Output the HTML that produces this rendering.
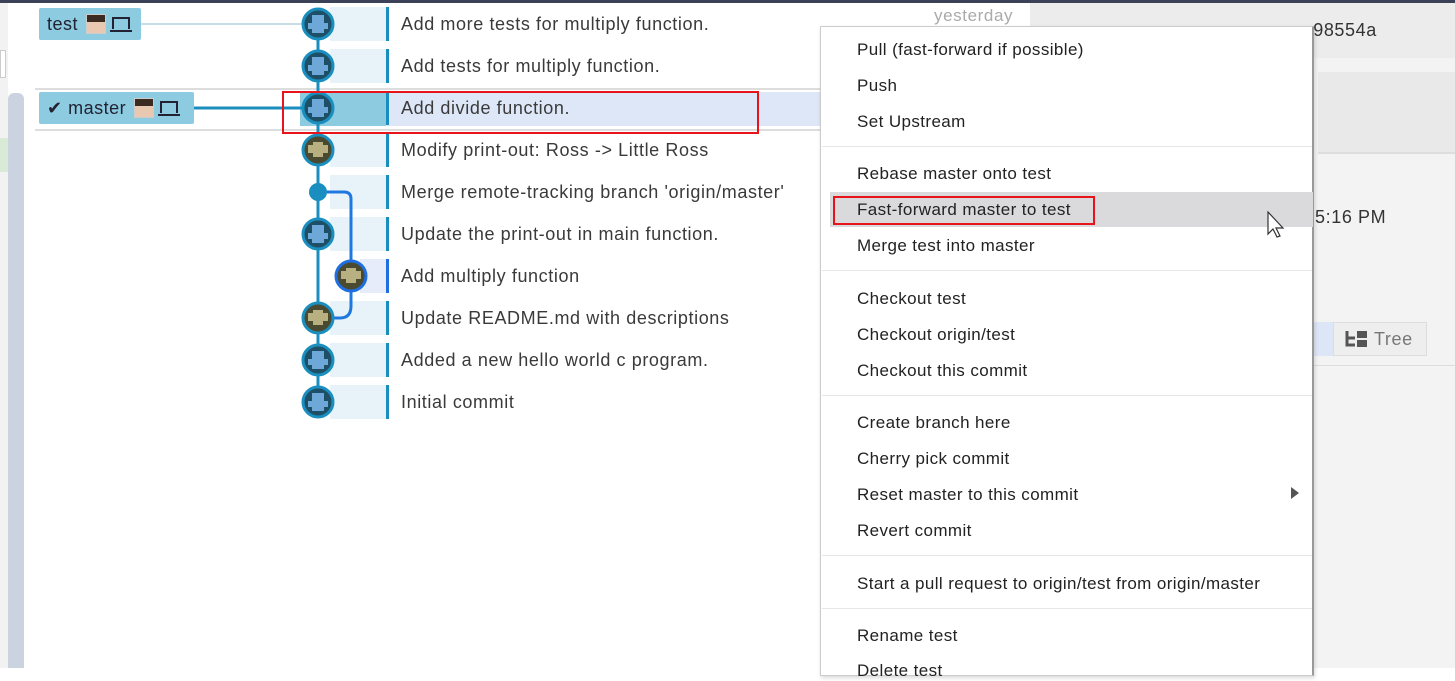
<!DOCTYPE html>
<html><head><meta charset="utf-8"><style>
*{margin:0;padding:0;box-sizing:border-box}
body{width:1455px;height:668px;overflow:hidden;background:#fff;font-family:"Liberation Sans",sans-serif;position:relative;color:#333}
.a{position:absolute}
.msg{position:absolute;left:386px;width:440px;height:34px;border-left:3px solid #1a8fbf;font-size:18px;line-height:34px;padding-left:12px;color:#3a3a3a;white-space:nowrap;letter-spacing:0.6px}
.strip{position:absolute;left:330px;width:56px;height:34px;background:#e8f3f9}
.mi{position:absolute;left:857px;font-size:17px;color:#222;white-space:nowrap;line-height:20px;letter-spacing:0.4px}
.sep{position:absolute;left:822px;width:490px;height:1px;background:#e6e6e6}
.tag{position:absolute;background:#8ccbe0;border-radius:2px;height:32px;font-size:18px;line-height:32px;color:#223;letter-spacing:0.5px}
.av{display:inline-block;width:20px;height:20px;vertical-align:middle;margin:0 6px 3px 8px;border:1px solid #ccc;background:linear-gradient(#3a2a22 40%,#e8c8b0 40%)}
.lp{display:inline-block;width:18px;height:12px;border:2px solid #223;border-bottom:none;vertical-align:middle;margin-bottom:4px;position:relative}
.lp:after{content:"";position:absolute;left:-4px;bottom:-3px;width:22px;height:2px;background:#223}
</style></head><body>
<div class="a" style="left:0;top:0;width:1455px;height:3px;background:#3b4157"></div>
<div class="a" style="left:0;top:3px;width:8px;height:665px;background:#f2f2f2"></div>
<div class="a" style="left:0;top:50px;width:6px;height:28px;background:#fff;border:1px solid #ccc"></div>
<div class="a" style="left:0;top:138px;width:8px;height:34px;background:#d9ebd6"></div>
<div class="a" style="left:8px;top:93px;width:16px;height:575px;background:#cbd3e0;border-radius:6px 6px 0 0"></div>
<div class="a" style="left:35px;top:88px;width:995px;height:2px;background:#ddd"></div>
<div class="a" style="left:35px;top:129px;width:995px;height:2px;background:#ddd"></div>
<div class="a" style="left:386px;top:92px;width:440px;height:34px;background:#dde7f8"></div>
<div class="a" style="left:300px;top:92px;width:86px;height:34px;background:#8ccbe0"></div>
<div class="strip" style="top:7px"></div><div class="strip" style="top:49px"></div>
<div class="strip" style="top:133px"></div><div class="strip" style="top:175px"></div><div class="strip" style="top:217px"></div>
<div class="strip" style="top:259px;left:360px;width:26px;background:#e6ecfa"></div><div class="strip" style="top:301px"></div>
<div class="strip" style="top:343px"></div><div class="strip" style="top:385px"></div>
<div class="msg" style="top:7px">Add more tests for multiply function.</div>
<div class="msg" style="top:49px">Add tests for multiply function.</div>
<div class="msg" style="top:91px">Add divide function.</div>
<div class="msg" style="top:133px">Modify print-out: Ross -&gt; Little Ross</div>
<div class="msg" style="top:175px">Merge remote-tracking branch 'origin/master'</div>
<div class="msg" style="top:217px">Update the print-out in main function.</div>
<div class="msg" style="top:259px;border-left-color:#1f6fe0">Add multiply function</div>
<div class="msg" style="top:301px">Update README.md with descriptions</div>
<div class="msg" style="top:343px">Added a new hello world c program.</div>
<div class="msg" style="top:385px">Initial commit</div>
<div class="a" style="left:934px;top:6px;font-size:17px;color:#aaa;letter-spacing:0.6px">yesterday</div>
<svg class="a" style="left:0;top:0" width="420" height="430">
<line x1="140" y1="24" x2="305" y2="24" stroke="#c9dde6" stroke-width="2"/>
<line x1="192" y1="108" x2="305" y2="108" stroke="#1a8fbf" stroke-width="3"/>
<line x1="318" y1="24" x2="318" y2="402" stroke="#1a8fbf" stroke-width="3"/>
<path d="M318 192 H344 Q351 192 351 199 V306 Q351 318 340 318 H318" fill="none" stroke="#1f78e0" stroke-width="3"/>
<g stroke="#1a8fbf" stroke-width="3">
<circle cx="318" cy="24" r="15" fill="#1d4f66"/><circle cx="318" cy="66" r="15" fill="#1d4f66"/>
<circle cx="318" cy="108" r="15" fill="#1d4f66"/><circle cx="318" cy="150" r="15" fill="#4a4a30"/>
<circle cx="318" cy="234" r="15" fill="#1d4f66"/><circle cx="318" cy="318" r="15" fill="#4a4a30"/>
<circle cx="318" cy="360" r="15" fill="#1d4f66"/><circle cx="318" cy="402" r="15" fill="#1d4f66"/>
<circle cx="351" cy="276" r="15" fill="#4a4a30" stroke="#1f6fe0"/>
</g>
<circle cx="318" cy="192" r="9" fill="#1a8fbf"/>
<g fill="#6ea8d8">
<rect x="312" y="15" width="12" height="18"/><rect x="308" y="23" width="20" height="6"/>
<rect x="312" y="57" width="12" height="18"/><rect x="308" y="65" width="20" height="6"/>
<rect x="312" y="99" width="12" height="18"/><rect x="308" y="107" width="20" height="6"/>
<rect x="312" y="225" width="12" height="18"/><rect x="308" y="233" width="20" height="6"/>
<rect x="312" y="351" width="12" height="18"/><rect x="308" y="359" width="20" height="6"/>
<rect x="312" y="393" width="12" height="18"/><rect x="308" y="401" width="20" height="6"/>
</g>
<g fill="#b8b080">
<rect x="308" y="145" width="20" height="8"/><rect x="313" y="142" width="10" height="15"/>
<rect x="308" y="313" width="20" height="8"/><rect x="313" y="310" width="10" height="15"/>
<rect x="341" y="271" width="20" height="8"/><rect x="346" y="268" width="10" height="15"/>
</g>
</svg>
<div class="tag" style="left:39px;top:8px;width:102px;padding-left:8px">test<span class="av"></span><span class="lp"></span></div>
<div class="tag" style="left:39px;top:92px;width:155px;padding-left:8px">✔ master<span class="av"></span><span class="lp"></span></div>
<div class="a" style="left:282px;top:91px;width:477px;height:43px;border:2px solid #e8141c"></div>
<div class="a" style="left:1030px;top:3px;width:425px;height:665px;background:#f3f3f3;border-left:1px solid #ddd"></div>
<div class="a" style="left:1030px;top:3px;width:425px;height:55px;background:#ececec"></div>
<div class="a" style="left:1302px;top:20px;font-size:18px;color:#333;letter-spacing:0.6px">: 98554a</div>
<div class="a" style="left:1318px;top:72px;width:137px;height:80px;background:#e9e9e9"></div>
<div class="a" style="left:1318px;top:152px;width:137px;height:2px;background:#ddd"></div>
<div class="a" style="left:1315px;top:207px;font-size:18px;color:#333;letter-spacing:0.6px">5:16 PM</div>
<div class="a" style="left:1313px;top:322px;width:20px;height:34px;background:#dde6f6"></div>
<div class="a" style="left:1333px;top:322px;width:94px;height:34px;background:#eee;border:1px solid #ddd;font-size:18px;line-height:32px;color:#777;padding-left:40px;letter-spacing:0.6px">Tree</div>
<svg class="a" style="left:1345px;top:329px" width="24" height="20"><path d="M2 2v14h8M2 9h8" stroke="#555" stroke-width="3" fill="none"/><rect x="12" y="2" width="10" height="7" fill="#555"/><rect x="12" y="11" width="10" height="7" fill="#555"/></svg>
<div class="a" style="left:1313px;top:365px;width:142px;height:1px;background:#ddd"></div>
<div class="a" style="left:820px;top:26px;width:494px;height:650px;background:#fff;border:1px solid #ccc;border-right:2px solid #999;box-shadow:1px 2px 4px rgba(0,0,0,.15)"></div>
<div class="a" style="left:830px;top:192px;width:483px;height:35px;background:#dadadc"></div>
<div class="a" style="left:833px;top:196px;width:262px;height:29px;border:2px solid #e8141c"></div>
<div class="mi" style="top:40px">Pull (fast-forward if possible)</div>
<div class="mi" style="top:76px">Push</div>
<div class="mi" style="top:112px">Set Upstream</div>
<div class="sep" style="top:146px"></div>
<div class="mi" style="top:164px">Rebase master onto test</div>
<div class="mi" style="top:200px">Fast-forward master to test</div>
<div class="mi" style="top:236px">Merge test into master</div>
<div class="sep" style="top:270px"></div>
<div class="mi" style="top:289px">Checkout test</div>
<div class="mi" style="top:325px">Checkout origin/test</div>
<div class="mi" style="top:361px">Checkout this commit</div>
<div class="sep" style="top:395px"></div>
<div class="mi" style="top:413px">Create branch here</div>
<div class="mi" style="top:449px">Cherry pick commit</div>
<div class="mi" style="top:485px">Reset master to this commit</div>
<div class="a" style="left:1291px;top:487px;width:0;height:0;border-left:8px solid #555;border-top:6px solid transparent;border-bottom:6px solid transparent"></div>
<div class="mi" style="top:521px">Revert commit</div>
<div class="sep" style="top:555px"></div>
<div class="mi" style="top:574px">Start a pull request to origin/test from origin/master</div>
<div class="sep" style="top:608px"></div>
<div class="mi" style="top:626px">Rename test</div>
<div class="mi" style="top:661px">Delete test</div>
<svg class="a" style="left:1267px;top:211px" width="20" height="28"><path d="M1 1v22l5-5 4 8 3-1-4-8h7z" fill="#fff" stroke="#333" stroke-width="1.2"/></svg>
</body></html>
